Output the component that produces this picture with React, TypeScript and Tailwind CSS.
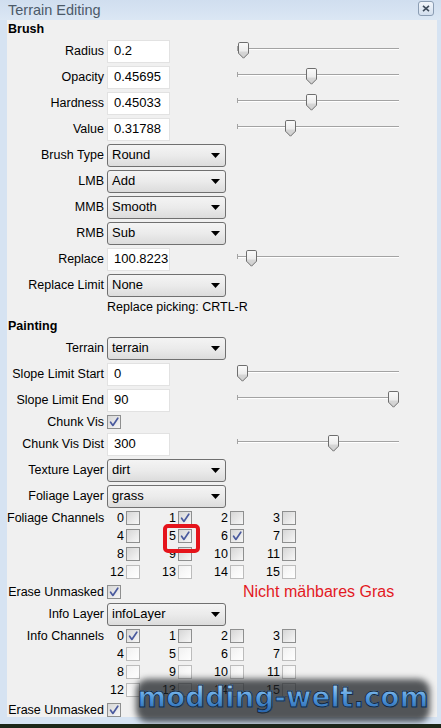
import React from 'react'

const font = "font-['Liberation_Sans',Arial,sans-serif]"

function Check() {
  return (
    <svg width="12" height="12" viewBox="0 0 12 12" className="block">
      <path d="M2.6 6.2 L4.9 9.4 L9.8 2.2" fill="none" stroke="#4a5a9e" strokeWidth="1.7" strokeLinecap="round" strokeLinejoin="round" />
    </svg>
  )
}

function Box({ checked = false, light = false }: { checked?: boolean; light?: boolean }) {
  return (
    <div
      className={
        'w-[14px] h-[14px] shrink-0 border flex items-center justify-center ' +
        (light
          ? 'border-[#bcbcbc] bg-linear-to-br from-[#f1f1f1] to-white'
          : 'border-[#8e8f8f] bg-linear-to-br from-[#d6d6d6] to-[#f7f7f7]')
      }
    >
      {checked && <Check />}
    </div>
  )
}

function Thumb() {
  return (
    <svg width="11" height="17" viewBox="0 0 11 17" className="block">
      <defs>
        <linearGradient id="thumbg" x1="0" y1="0" x2="0" y2="1">
          <stop offset="0" stopColor="#fbfbfb" />
          <stop offset="0.55" stopColor="#ececec" />
          <stop offset="0.6" stopColor="#d6d6d6" />
          <stop offset="1" stopColor="#cfcfcf" />
        </linearGradient>
      </defs>
      <path d="M1.8 0.5 H9.2 Q10.5 0.5 10.5 1.8 V11.2 L5.5 16.2 L0.5 11.2 V1.8 Q0.5 0.5 1.8 0.5 Z" fill="url(#thumbg)" stroke="#6e6e6e" strokeWidth="1" />
    </svg>
  )
}

function Slider({ value }: { value: number }) {
  const left = Math.round(value * 151)
  return (
    <div className="relative w-[162px] h-[26px] shrink-0">
      <div className="absolute left-0 right-0 top-[10px] h-[2px] border-t border-[#a3a3a3] border-b border-b-white" />
      <div className="absolute left-0 top-[8px] w-[1px] h-[5px] bg-[#a3a3a3]" />
      <div className="absolute left-0 top-[4px]" style={{ left }}>
        <Thumb />
      </div>
    </div>
  )
}

function Input({ value }: { value: string }) {
  return (
    <div className="w-[63px] h-[23px] bg-white border border-[#e2e2e2] flex items-center pl-[6px] text-[13px]">
      {value}
    </div>
  )
}

function Select({ value }: { value: string }) {
  return (
    <div className="w-[119px] h-[23px] rounded-[3px] border border-[#707070] bg-linear-to-b from-[#f4f4f4] via-[#ebebeb] to-[#dcdcdc] flex items-center pl-[4px] pr-[5px] justify-between text-[13px]">
      <span>{value}</span>
      <svg width="9" height="5" viewBox="0 0 9 5" className="block">
        <path d="M0 0 H9 L4.5 5 Z" fill="#000" />
      </svg>
    </div>
  )
}

function Row({ label, children, slider, h = 'h-[26px]', extra }: { label: string; children?: React.ReactNode; slider?: number; h?: string; extra?: React.ReactNode }) {
  return (
    <div className={'flex items-center ' + h}>
      <span className="w-[97px] shrink-0 text-right whitespace-nowrap">{label}</span>
      <div className="ml-[3px] w-[130px] shrink-0 flex items-center">{children}</div>
      {slider !== undefined && <Slider value={slider} />}
      {extra}
    </div>
  )
}

function Channels({ label, checked, light }: { label: string; checked: number[]; light: number[] }) {
  const rows = [0, 1, 2, 3]
  return (
    <div className="flex pb-[2px]">
      <span className="w-[97px] shrink-0 text-right whitespace-nowrap h-[18px] leading-[18px]">{label}</span>
      <div className="ml-[3px] flex flex-col">
        {rows.map(r => (
          <div key={r} className="flex h-[18px] items-center">
            {[0, 1, 2, 3].map(c => {
              const n = r * 4 + c
              return (
                <div key={c} className={(c === 0 ? 'w-[34px]' : 'w-[52px]') + ' flex items-center justify-end pr-[1px] gap-[2px]'}>
                  <span>{n}</span>
                  <Box checked={checked.includes(n)} light={light.includes(n)} />
                </div>
              )
            })}
          </div>
        ))}
      </div>
    </div>
  )
}

export default function App() {
  return (
    <div className={'relative w-[441px] h-[728px] overflow-hidden bg-[#d6e3f2] flex flex-col ' + font}>
      <div className="h-[20px] shrink-0 relative bg-linear-to-b from-[#d0deef] to-[#dbe7f4]">
        <span className="absolute left-[8px] top-[0px] text-[14.5px] leading-[20px] text-[#4c5a69]">Terrain Editing</span>
        <div className="absolute left-[418px] top-[1px] w-[16px] h-[15px] rounded-[3px] border border-[#8b9db3] bg-linear-to-b from-[#f2f6fb] to-[#d3dfee] flex items-center justify-center">
          <svg width="8" height="7" viewBox="0 0 8 7" className="block">
            <path d="M1 0.8 L7 6.2 M7 0.8 L1 6.2" stroke="#3f4c5c" strokeWidth="1.6" />
          </svg>
        </div>
      </div>

      <div className="flex flex-1 min-h-0">
        <div className="w-[7px] shrink-0" />
        <div className="relative w-[430px] shrink-0 bg-[#f0f0f0] text-[12.5px] text-black">
          <div className="h-[18px] pl-[1px] pt-[1px] font-bold leading-[17px] text-[12.5px]">Brush</div>
          <Row label="Radius" slider={0.005}><Input value="0.2" /></Row>
          <Row label="Opacity" slider={0.46}><Input value="0.45695" /></Row>
          <Row label="Hardness" slider={0.457}><Input value="0.45033" /></Row>
          <Row label="Value" slider={0.32}><Input value="0.31788" /></Row>
          <Row label="Brush Type"><Select value="Round" /></Row>
          <Row label="LMB"><Select value="Add" /></Row>
          <Row label="MMB"><Select value="Smooth" /></Row>
          <Row label="RMB"><Select value="Sub" /></Row>
          <Row label="Replace" slider={0.06}><Input value="100.8223" /></Row>
          <Row label="Replace Limit"><Select value="None" /></Row>
          <div className="h-[19px] pl-[100px] flex items-center text-[12.5px]">Replace picking: CRTL-R</div>
          <div className="h-[18px] pl-[1px] font-bold leading-[18px]">Painting</div>
          <Row label="Terrain"><Select value="terrain" /></Row>
          <Row label="Slope Limit Start" slider={0}><Input value="0" /></Row>
          <Row label="Slope Limit End" slider={1}><Input value="90" /></Row>
          <Row label="Chunk Vis" h="h-[18px]"><Box checked /></Row>
          <Row label="Chunk Vis Dist" slider={0.6}><Input value="300" /></Row>
          <Row label="Texture Layer"><Select value="dirt" /></Row>
          <Row label="Foliage Layer"><Select value="grass" /></Row>
          <Channels label="Foliage Channels" checked={[1, 5, 6]} light={[12, 13, 14, 15]} />
          <Row
            label="Erase Unmasked"
            h="h-[18px]"
            extra={<span className="ml-[6px] text-[16px] text-[#e3191f] whitespace-nowrap">Nicht mähbares Gras</span>}
          >
            <Box checked />
          </Row>
          <Row label="Info Layer"><Select value="infoLayer" /></Row>
          <Channels label="Info Channels" checked={[0]} light={[4, 5, 6, 7, 8, 9, 10, 11, 12, 13, 14, 15]} />
          <Row label="Erase Unmasked" h="h-[18px]"><Box checked /></Row>

          <div className="absolute left-[156px] top-[504px] w-[37px] h-[29px] rounded-[5px] border-[4px] border-[#e5141b]" />
        </div>
        <div className="flex-1" />
      </div>
      <div className="h-[7px] shrink-0" />
      <div className="h-[4px] shrink-0 bg-[#1c2718]" />

      <div className="absolute left-[136px] top-[679px] w-[294px] h-[43px] rounded-[12px] bg-[#1e2226]/75 blur-[3px]" />
      <div className="absolute left-[136px] top-[674px] w-[294px] h-[48px] flex items-center justify-center">
        <span className="font-['DejaVu_Sans',sans-serif] font-bold text-[27.5px] leading-none tracking-[0.2px] bg-linear-to-b from-[#9fd0f7] via-[#4f97dc] to-[#2b66ad] bg-clip-text text-transparent [-webkit-text-stroke:1px_#18293c]">
          modding-welt.com
        </span>
      </div>
    </div>
  )
}
